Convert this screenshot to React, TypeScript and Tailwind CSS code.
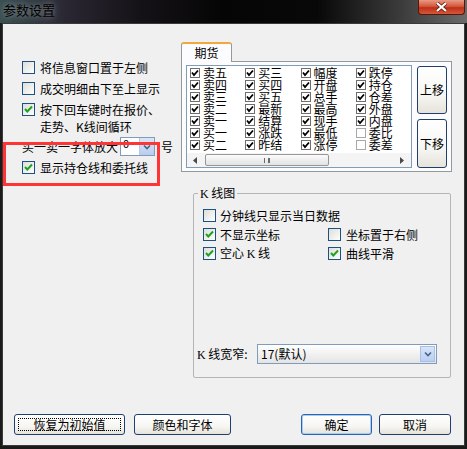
import type { ReactNode } from 'react'

const listCols: [string, boolean][][] = [
  [['卖五', true], ['卖四', true], ['卖三', true], ['卖二', true], ['卖一', true], ['买一', true], ['买二', true]],
  [['买三', true], ['买四', true], ['买五', true], ['最新', true], ['结算', true], ['涨跌', true], ['昨结', true]],
  [['幅度', true], ['开盘', true], ['总手', true], ['最高', true], ['现手', true], ['最低', true], ['涨停', true]],
  [['跌停', true], ['持仓', true], ['仓差', true], ['外盘', true], ['内盘', true], ['委比', false], ['委差', false]],
]

function CheckBox({ checked }: { checked?: boolean }) {
  return (
    <svg width="13" height="13" viewBox="0 0 13 13" className="shrink-0">
      <defs>
        <linearGradient id="cbg" x1="0" y1="0" x2="1" y2="1">
          <stop offset="0" stopColor="#dcdcd7" />
          <stop offset="1" stopColor="#ffffff" />
        </linearGradient>
      </defs>
      <rect x="0.5" y="0.5" width="12" height="12" fill="url(#cbg)" stroke="#1c5180" />
      {checked && <path d="M3 6 L5.3 8.5 L10 3.5" fill="none" stroke="#21a121" strokeWidth="2" />}
    </svg>
  )
}

function SmallCheck({ checked }: { checked: boolean }) {
  return (
    <svg width="10" height="10" viewBox="0 0 10 10" className="shrink-0">
      <rect x="0.5" y="0.5" width="9" height="9" fill="#fff" stroke={checked ? '#6f6f6f' : '#a8a8a8'} />
      {checked && <path d="M2 4.5 L4 7 L8 2.5" fill="none" stroke="#000" strokeWidth="1.8" />}
    </svg>
  )
}

function Chevron() {
  return (
    <svg width="8" height="6" viewBox="0 0 8 6">
      <path d="M1 1.5 L4 4.5 L7 1.5" fill="none" stroke="#4d6185" strokeWidth="1.6" />
    </svg>
  )
}

function WinButton({ children, className = '' }: { children: ReactNode; className?: string }) {
  return (
    <button
      className={`flex items-center justify-center rounded-[3px] border border-[#1f3f6e] bg-[linear-gradient(180deg,#ffffff_0%,#f6f6f3_60%,#e6e3da_100%)] text-[12px] leading-[12px] text-black ${className}`}
    >
      {children}
    </button>
  )
}

function Row({ checked, label }: { checked?: boolean; label: string }) {
  return (
    <div className="flex h-[21px] items-center">
      <CheckBox checked={checked} />
      <span className="ml-[5px] leading-[14px]">{label}</span>
    </div>
  )
}

export default function App() {
  return (
    <div className="relative h-[449px] w-[467px] overflow-hidden bg-[#1a1a1a] font-['Noto_Sans_CJK_SC',sans-serif] text-[12px] text-black">
      {/* Title bar */}
      <div className="flex h-[23px] items-start bg-[linear-gradient(90deg,#3a5053_0%,#2a2733_14%,#151217_30%,#050505_48%,#080808_68%,#3c3c3c_86%,#6b6b6b_100%)]">
        <span className="ml-[3px] mt-[2px] text-[13px] leading-[15px] [text-shadow:0_0_6px_rgba(255,255,255,0.55)]">参数设置</span>
        <div className="ml-auto mr-[2px] flex h-[15px] w-[47px] items-center justify-center rounded-b-[4px] border border-t-0 border-[#5a1408] bg-[linear-gradient(180deg,#e79a86_0%,#d5583c_45%,#bd2f17_55%,#d4583b_100%)]">
          <svg width="13" height="10" viewBox="0 0 13 10">
            <path d="M2 1 L11 9 M11 1 L2 9" stroke="#5b1a10" strokeWidth="3.6" />
            <path d="M2 1 L11 9 M11 1 L2 9" stroke="#fff" strokeWidth="2.2" />
          </svg>
        </div>
      </div>

      {/* Client area */}
      <div className="mx-[2px] flex h-[423px] flex-col border border-[#3a3a3a] bg-[#f0f0f0]">
        <div className="flex h-[354px]">
          {/* Left options */}
          <div className="w-[178px] pl-[19px] pt-[33px]">
            <Row label="将信息窗口置于左侧" />
            <Row label="成交明细由下至上显示" />
            <div className="flex items-start">
              <div className="mt-[4px]">
                <CheckBox checked />
              </div>
              <span className="ml-[5px] mt-[2px] leading-[17px]">
                按下回车键时在报价、
                <br />
                走势、K线间循环
              </span>
            </div>
            <div className="mt-[2px] flex h-[19px] items-center">
              <span className="leading-[14px]">买一卖一字体放大</span>
              <div className="ml-[2px] flex h-[19px] w-[35px] border border-[#7f9db9] bg-white">
                <span className="flex-1 pl-[2px] text-[11px] leading-[10px]">0</span>
                <div className="flex w-[15px] items-center justify-center border-l border-[#b6c8e6] bg-[linear-gradient(180deg,#dbe6f6,#b8cdee)]">
                  <Chevron />
                </div>
              </div>
              <span className="ml-[6px] leading-[14px]">号</span>
            </div>
            <div className="mt-[1px]">
              <Row checked label="显示持仓线和委托线" />
            </div>
          </div>

          {/* Right side */}
          <div className="pt-[18px]">
            <div className="relative z-10 -mb-px flex h-[20px] w-[51px] items-center justify-center rounded-t-[3px] border-x border-t-2 border-x-[#919b9c] border-t-[#f2a83a] bg-[#fcfcfe] leading-[14px]">
              期货
            </div>
            <div className="flex h-[111px] w-[271px] border border-[#919b9c] bg-[#fcfcfe] pl-[4px] pt-[3px]">
              <div className="flex h-[103px] w-[226px] flex-col border border-[#7f9db9] bg-white">
                <div className="flex pl-[3px] pt-[1px]">
                  {listCols.map((col, ci) => (
                    <div key={ci} className="w-[56px]">
                      {col.map(([name, on]) => (
                        <div key={name} className="flex h-[12px] items-center overflow-visible">
                          <SmallCheck checked={on} />
                          <span className="ml-[3px] text-[12px] leading-[12px]">{name}</span>
                        </div>
                      ))}
                    </div>
                  ))}
                </div>
                <div className="mt-auto flex h-[14px] items-center bg-[#f4f4f4] px-[4px]">
                  <svg width="5" height="7" viewBox="0 0 5 7" className="ml-[2px]">
                    <path d="M4 0 L0 3.5 L4 7 Z" fill="#4a4a4a" />
                  </svg>
                  <div className="ml-[7px] flex h-[12px] w-[124px] items-center justify-center rounded-[2px] border border-[#979797] bg-[linear-gradient(180deg,#fbfbfb,#e2e2e2)]">
                    <span className="h-[5px] w-[5px] border-x border-[#6a6a6a]" />
                    <span className="h-[5px] w-px bg-[#6a6a6a]" />
                  </div>
                  <svg width="5" height="7" viewBox="0 0 5 7" className="ml-auto mr-[3px]">
                    <path d="M1 0 L5 3.5 L1 7 Z" fill="#4a4a4a" />
                  </svg>
                </div>
              </div>
              <div className="ml-[5px] flex flex-col">
                <WinButton className="mt-px h-[48px] w-[30px]">上移</WinButton>
                <WinButton className="mt-[5px] h-[49px] w-[30px]">下移</WinButton>
              </div>
            </div>

            <fieldset className="ml-[12px] mt-[14px] h-[192px] w-[258px] rounded-[2px] border border-[#b5b5b5]">
              <legend className="ml-[4px] px-[2px] leading-[14px]">
                <span className="font-['Liberation_Serif',serif]">K</span> 线图
              </legend>
              <div className="flex flex-col pl-[9px]">
                <div className="mt-[5px] flex h-[19px] items-center">
                  <CheckBox />
                  <span className="ml-[4px] leading-[14px]">分钟线只显示当日数据</span>
                </div>
                <div className="flex h-[19px] items-center">
                  <div className="flex w-[125px] items-center">
                    <CheckBox checked />
                    <span className="ml-[4px] leading-[14px]">不显示坐标</span>
                  </div>
                  <CheckBox />
                  <span className="ml-[5px] leading-[14px]">坐标置于右侧</span>
                </div>
                <div className="flex h-[19px] items-center">
                  <div className="flex w-[125px] items-center">
                    <CheckBox checked />
                    <span className="ml-[4px] leading-[14px]">
                      空心 <span className="font-['Liberation_Serif',serif]">K</span> 线
                    </span>
                  </div>
                  <CheckBox checked />
                  <span className="ml-[5px] leading-[14px]">曲线平滑</span>
                </div>
                <div className="-ml-[6px] mt-[81px] flex h-[20px] items-center">
                  <span className="w-[60px] leading-[14px]">
                    <span className="font-['Liberation_Serif',serif]">K</span> 线宽窄:
                  </span>
                  <div className="flex h-[20px] w-[180px] items-center border border-[#7f9db9] bg-[linear-gradient(180deg,#ffffff,#e4e4e4)]">
                    <span className="flex-1 pl-[3px] text-[12px] leading-[14px]">17(默认)</span>
                    <div className="mr-px flex h-[16px] w-[15px] items-center justify-center border border-[#a9bfe6] bg-[linear-gradient(180deg,#d8e4f8,#b9cff2)]">
                      <Chevron />
                    </div>
                  </div>
                </div>
              </div>
            </fieldset>
          </div>
        </div>

        {/* Bottom buttons */}
        <div className="ml-[11px] mt-[36px] flex">
          <WinButton className="relative h-[21px] w-[111px]">
            <span className="absolute inset-[3px] border border-dotted border-black" />
            恢复为初始值
          </WinButton>
          <WinButton className="ml-[9px] h-[21px] w-[97px]">颜色和字体</WinButton>
          <WinButton className="ml-[70px] h-[21px] w-[71px] border-[#2b62b4] shadow-[inset_0_0_0_1px_#a8ccf2]">确定</WinButton>
          <WinButton className="ml-[7px] h-[21px] w-[72px]">取消</WinButton>
        </div>
      </div>

      {/* Red annotation */}
      <div className="pointer-events-none absolute left-[3px] top-[142px] h-[44px] w-[157px] border-[3px] border-[#ff3434]" />
    </div>
  )
}
